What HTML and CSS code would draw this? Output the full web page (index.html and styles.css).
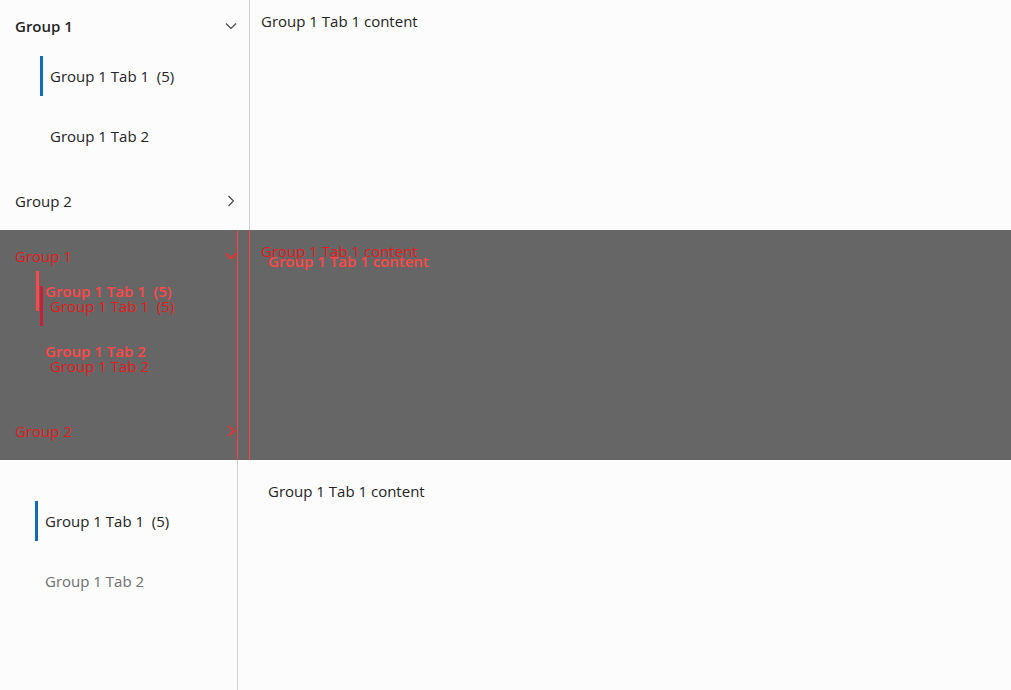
FILE: index.html
```html
<!DOCTYPE html>
<html>
<head>
<meta charset="utf-8">
<link rel="stylesheet" href="styles.css">
</head>
<body>
<section class="panel">
  <nav class="nav nav-wide">
    <div class="group-head"><span class="strong">Group 1</span>
      <svg class="chev" viewBox="0 0 16 16"><path d="M3 5.5 L8 10.5 L13 5.5" /></svg></div>
    <div class="tabs">
      <div class="tab active">Group 1 Tab 1&nbsp; (5)</div>
      <div class="tab">Group 1 Tab 2</div>
    </div>
    <div class="group-head"><span>Group 2</span>
      <svg class="chev" viewBox="0 0 16 16"><path d="M5.5 3 L10.5 8 L5.5 13" /></svg></div>
  </nav>
  <main class="content content-wide">Group 1 Tab 1 content</main>
</section>

<section class="panel diff">
  <div class="layer layer-a">
    <nav class="nav nav-wide">
      <div class="group-head"><span>Group 1</span>
        <svg class="chev" viewBox="0 0 16 16"><path d="M3 5.5 L8 10.5 L13 5.5" /></svg></div>
      <div class="tabs">
        <div class="tab active">Group 1 Tab 1&nbsp; (5)</div>
        <div class="tab">Group 1 Tab 2</div>
      </div>
      <div class="group-head"><span>Group 2</span>
        <svg class="chev" viewBox="0 0 16 16"><path d="M5.5 3 L10.5 8 L5.5 13" /></svg></div>
    </nav>
    <main class="content content-wide">Group 1 Tab 1 content</main>
  </div>
  <div class="layer layer-b">
    <nav class="nav nav-narrow">
      <div class="tabs tabs-flat">
        <div class="tab active">Group 1 Tab 1&nbsp; (5)</div>
        <div class="tab">Group 1 Tab 2</div>
      </div>
    </nav>
    <main class="content content-narrow">Group 1 Tab 1 content</main>
  </div>
</section>

<section class="panel">
  <nav class="nav nav-narrow">
    <div class="tabs tabs-flat">
      <div class="tab active">Group 1 Tab 1&nbsp; (5)</div>
      <div class="tab muted">Group 1 Tab 2</div>
    </div>
  </nav>
  <main class="content content-narrow">Group 1 Tab 1 content</main>
</section>
</body>
</html>
```

FILE: styles.css
```css
html, body {
  margin: 0;
  padding: 0;
  background: #fcfcfc;
}
body {
  font-family: "Open Sans", "Noto Sans", sans-serif;
  font-size: 15px;
  line-height: 20px;
  color: #242424;
  width: 1011px;
  height: 690px;
  overflow: hidden;
}
.panel {
  height: 230px;
  display: flex;
  overflow: hidden;
}
.nav {
  box-sizing: border-box;
  height: 100%;
  flex: none;
  border-right: 1px solid #d1d1d1;
}
.nav-wide { width: 250px; }
.nav-narrow { width: 238px; }
.group-head {
  height: 52px;
  display: flex;
  align-items: center;
  justify-content: space-between;
  padding: 0 10px 0 15px;
}
.strong { font-weight: 600; }
.chev {
  width: 16px;
  height: 16px;
  fill: none;
  stroke: #424242;
  stroke-width: 1.1;
}
.tabs {
  display: flex;
  flex-direction: column;
  gap: 20px;
  padding: 4px 0 19px;
}
.tabs-flat { padding-top: 41px; }
.tab {
  height: 40px;
  display: flex;
  align-items: center;
  margin-left: 40px;
  padding-left: 7px;
  border-left: 3px solid transparent;
  box-sizing: border-box;
  white-space: nowrap;
}
.tabs-flat .tab { margin-left: 35px; }
.tab.active { border-left-color: #0f6cbd; }
.tab.muted { color: #707070; }
.content {
  flex: 1;
  white-space: nowrap;
}
.content-wide { padding: 11px 0 0 11px; }
.content-narrow { padding: 21px 0 0 30px; }

/* diff panel */
.diff {
  background: #666666;
  display: grid;
}
.layer {
  grid-area: 1 / 1;
  display: flex;
  height: 230px;
}
.diff .nav { border-right-color: #ff4040; }
.layer-a { color: #e41c1c; }
.layer-a .chev { stroke: #ff2a2a; stroke-width: 1.6; }
.layer-a .tab.active { border-left-color: #c4203a; }
.layer-b { color: #ff4848; font-weight: 600; }
.layer-b .tab.active { border-left-color: #ff4848; }
.layer-b .tabs-flat .tab { margin-left: 36px; padding-left: 6px; }
```
